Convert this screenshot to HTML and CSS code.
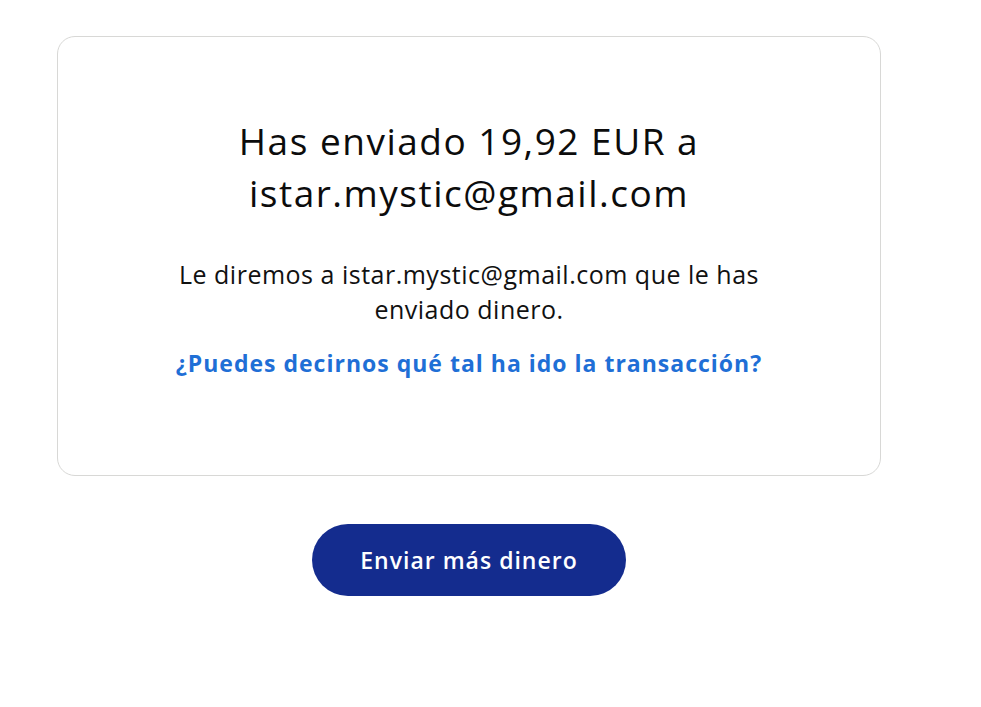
FILE: index.html
```html
<!DOCTYPE html>
<html lang="es">
<head>
<meta charset="utf-8">
<title>Enviado</title>
<link rel="stylesheet" href="styles.css">
</head>
<body>
<main class="page">
  <section class="card">
    <h1 class="title">Has enviado 19,92 EUR a<br>istar.mystic@gmail.com</h1>
    <p class="note">Le diremos a istar.mystic@gmail.com que le has<br>enviado dinero.</p>
    <a class="feedback" href="#">¿Puedes decirnos qué tal ha ido la transacción?</a>
  </section>
  <div class="actions">
    <button class="send-more" type="button">Enviar más dinero</button>
  </div>
</main>
</body>
</html>
```
FILE: styles.css
```css
html, body {
  margin: 0;
  padding: 0;
  background: #ffffff;
}
body {
  font-family: "Open Sans", "Lato", sans-serif;
  color: #111111;
}
.page {
  width: 824px;
  margin-left: 57px;
  padding-top: 36px;
  display: flex;
  flex-direction: column;
}
.card {
  box-sizing: border-box;
  height: 440px;
  border: 1px solid #d8d8d6;
  border-radius: 18px;
  display: flex;
  flex-direction: column;
  align-items: center;
  text-align: center;
  padding-top: 78px;
}
.title {
  margin: 0;
  font-size: 37px;
  font-weight: 400;
  line-height: 52px;
  letter-spacing: 1.5px;
  color: #0c0c0c;
}
.note {
  margin: 38px 0 0;
  font-size: 25px;
  line-height: 35px;
  letter-spacing: 0.5px;
  color: #111111;
}
.feedback {
  margin-top: 20px;
  font-size: 23px;
  font-weight: 700;
  letter-spacing: 1px;
  color: #1f6fd6;
  text-decoration: none;
}
.actions {
  display: flex;
  justify-content: center;
  margin-top: 48px;
}
.send-more {
  width: 314px;
  height: 72px;
  border: none;
  border-radius: 36px;
  background: #142c8e;
  color: #ffffff;
  font-family: "Open Sans", "Lato", sans-serif;
  font-size: 23px;
  font-weight: 600;
  letter-spacing: 1px;
}
```
